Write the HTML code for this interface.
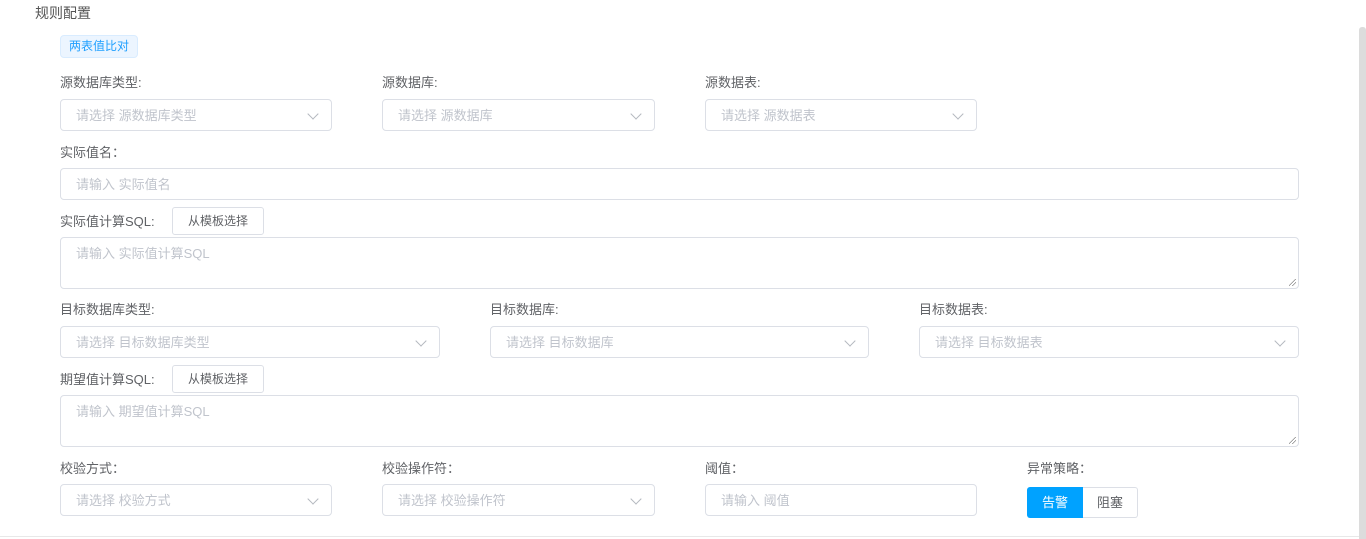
<!DOCTYPE html>
<html><head><meta charset="utf-8"><style>
*{box-sizing:border-box;margin:0;padding:0}
body{width:1366px;height:539px;background:#fff;position:relative;overflow:hidden;font-family:"Liberation Sans","Noto Sans CJK SC",sans-serif;color:#606266;font-size:13px}
.a{position:absolute}
.l{position:absolute;font-size:13px;color:#606266;line-height:16px}
.in{position:absolute;border:1px solid #dcdfe6;border-radius:4px;height:32px;color:#c0c4cc;font-size:13px;line-height:31px;padding-left:15px;background:#fff}
.sel::after{content:"";position:absolute;right:14px;top:10px;width:7px;height:7px;border-right:1px solid #b4b8bf;border-bottom:1px solid #b4b8bf;transform:rotate(45deg)}
.ta{position:absolute;border:1px solid #dcdfe6;border-radius:4px;height:52px;color:#c0c4cc;font-size:13px;line-height:20px;padding:6px 15px}
.ta::after{content:"";position:absolute;right:2px;bottom:2px;width:7px;height:7px;background:linear-gradient(135deg,transparent 45%,#888 45%,#888 52%,transparent 52%,transparent 70%,#888 70%,#888 77%,transparent 77%)}
.btn{position:absolute;border:1px solid #dcdfe6;border-radius:3px;height:28px;font-size:12px;line-height:27px;text-align:center;color:#606266;background:#fff}
</style></head><body>
<div class="a" style="left:35px;top:5px;font-size:14px;color:#555;line-height:16px">规则配置</div>
<div class="a" style="left:60px;top:35px;width:78px;height:23px;background:#ecf5ff;border:1px solid #d9ecff;border-radius:4px;color:#1e9fff;font-size:12px;line-height:21px;text-align:center">两表值比对</div>

<div class="l" style="left:60px;top:75px">源数据库类型:</div>
<div class="l" style="left:382px;top:75px">源数据库:</div>
<div class="l" style="left:705px;top:75px">源数据表:</div>
<div class="in sel" style="left:60px;top:99px;width:272px">请选择 源数据库类型</div>
<div class="in sel" style="left:382px;top:99px;width:273px">请选择 源数据库</div>
<div class="in sel" style="left:705px;top:99px;width:272px">请选择 源数据表</div>

<div class="l" style="left:60px;top:145px">实际值名：</div>
<div class="in" style="left:60px;top:168px;width:1239px">请输入 实际值名</div>

<div class="l" style="left:60px;top:214px">实际值计算SQL:</div>
<div class="btn" style="left:172px;top:207px;width:92px">从模板选择</div>
<div class="ta" style="left:60px;top:237px;width:1239px">请输入 实际值计算SQL</div>

<div class="l" style="left:60px;top:302px">目标数据库类型:</div>
<div class="l" style="left:490px;top:302px">目标数据库:</div>
<div class="l" style="left:919px;top:302px">目标数据表:</div>
<div class="in sel" style="left:60px;top:326px;width:380px">请选择 目标数据库类型</div>
<div class="in sel" style="left:490px;top:326px;width:379px">请选择 目标数据库</div>
<div class="in sel" style="left:919px;top:326px;width:380px">请选择 目标数据表</div>

<div class="l" style="left:60px;top:372px">期望值计算SQL:</div>
<div class="btn" style="left:172px;top:365px;width:92px">从模板选择</div>
<div class="ta" style="left:60px;top:395px;width:1239px">请输入 期望值计算SQL</div>

<div class="l" style="left:60px;top:461px">校验方式：</div>
<div class="l" style="left:382px;top:461px">校验操作符：</div>
<div class="l" style="left:705px;top:461px">阈值：</div>
<div class="l" style="left:1027px;top:461px">异常策略：</div>
<div class="in sel" style="left:60px;top:484px;width:272px">请选择 校验方式</div>
<div class="in sel" style="left:382px;top:484px;width:273px">请选择 校验操作符</div>
<div class="in" style="left:705px;top:484px;width:272px">请输入 阈值</div>
<div class="a" style="left:1027px;top:487px;width:56px;height:31px;background:#00a2ff;border-radius:3px 0 0 3px;color:#fff;font-size:13px;line-height:31px;text-align:center">告警</div>
<div class="a" style="left:1083px;top:487px;width:55px;height:31px;border:1px solid #dcdfe6;border-left:none;border-radius:0 3px 3px 0;color:#606266;font-size:13px;line-height:29px;text-align:center">阻塞</div>

<div class="a" style="left:0;top:536px;width:1359px;height:1px;background:#e8e8e8"></div>
<div class="a" style="left:1359px;top:27px;width:7px;height:512px;background:#dcdcdc;border-radius:3px 3px 0 0"></div>
</body></html>
